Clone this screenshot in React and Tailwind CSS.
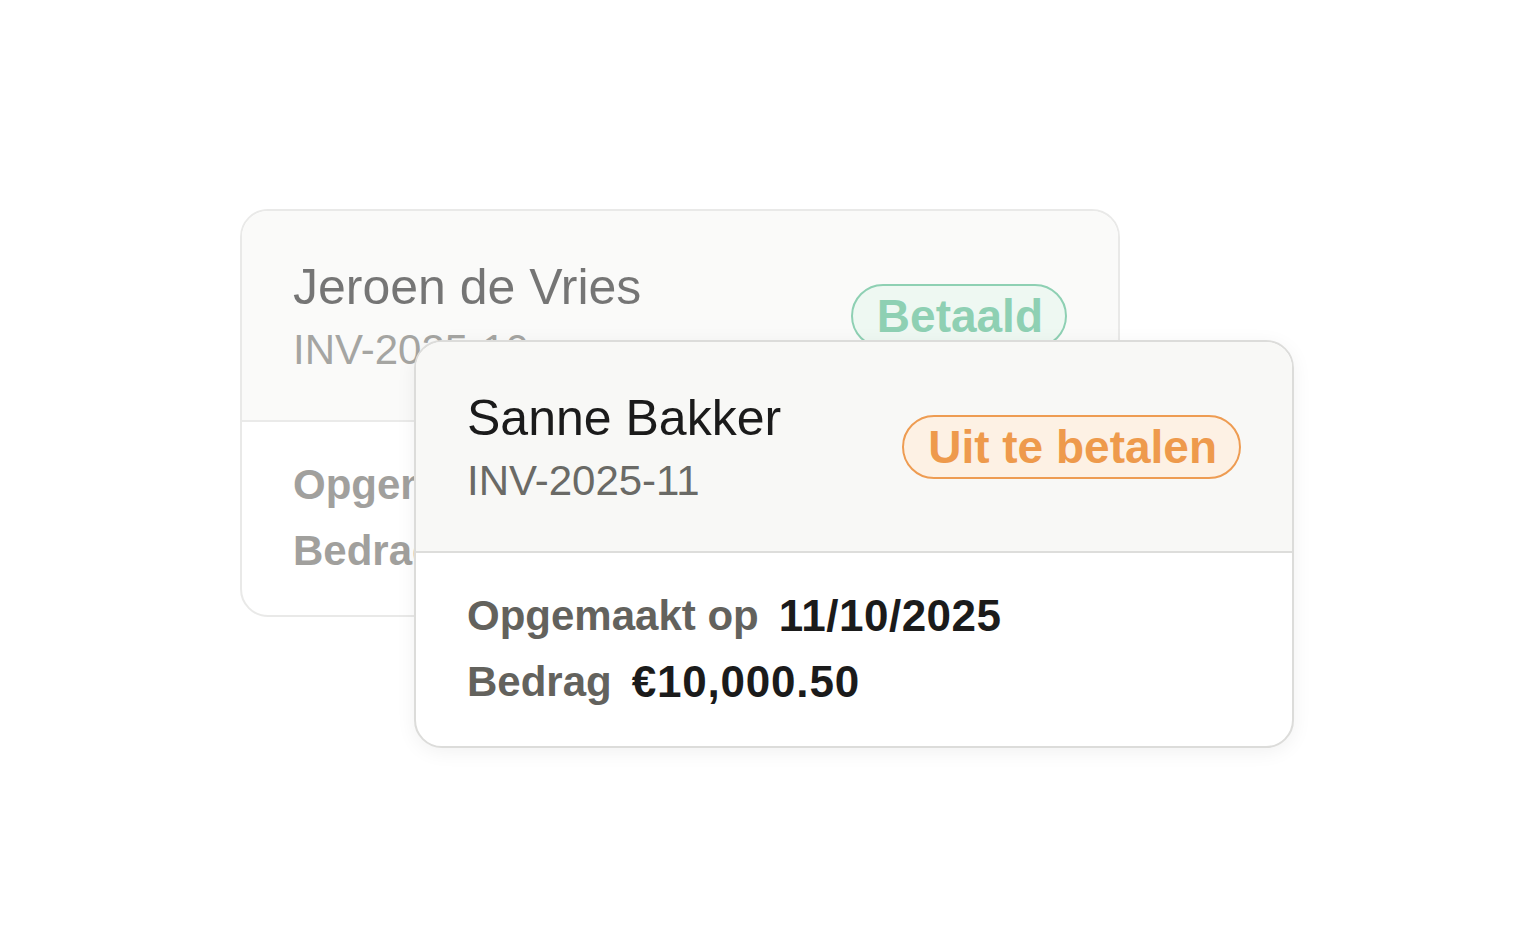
import React from "react";

const invoices = [
  {
    name: "Jeroen de Vries",
    number: "INV-2025-10",
    status: "Betaald",
    tone: "paid",
    created: "10/10/2025",
    amount: "€8,250.00",
  },
  {
    name: "Sanne Bakker",
    number: "INV-2025-11",
    status: "Uit te betalen",
    tone: "open",
    created: "11/10/2025",
    amount: "€10,000.50",
  },
];

const badgeTones = {
  paid: "bg-[#e3f5eb] border-[#44b182] text-[#44b182]",
  open: "bg-[#fdf1e4] border-[#ee9c52] text-[#ee9a4c]",
};

const InvoiceCard = ({ invoice, className = "" }) => (
  <div
    className={`w-[880px] h-[408px] flex flex-col rounded-[28px] border-2 border-[#dcdcda] bg-white overflow-hidden ${className}`}
  >
    <div className="h-[211px] shrink-0 flex items-center justify-between pl-[51px] pr-[51px] bg-[#f8f8f6] border-b-2 border-[#dddddb]">
      <div className="flex flex-col gap-[8px] pt-[1px]">
        <div className="text-[50px] leading-[60px] text-[#1b1b1b]">
          {invoice.name}
        </div>
        <div className="text-[42px] leading-[50px] text-[#6a6a66]">
          {invoice.number}
        </div>
      </div>
      <div
        className={`h-[64px] flex items-center pl-[24px] pr-[22px] rounded-full border-2 text-[46px] font-bold leading-none ${badgeTones[invoice.tone]}`}
      >
        {invoice.status}
      </div>
    </div>
    <div className="flex-1 flex flex-col justify-center gap-[14px] pl-[51px] pb-[2px]">
      <div className="flex items-center gap-[20px] leading-[52px] font-bold">
        <span className="text-[42px] text-[#63625d]">Opgemaakt op</span>
        <span className="text-[44px] tracking-[0.5px] text-[#1b1b1b]">
          {invoice.created}
        </span>
      </div>
      <div className="flex items-center gap-[20px] leading-[52px] font-bold">
        <span className="text-[42px] text-[#63625d]">Bedrag</span>
        <span className="text-[44px] tracking-[0.8px] text-[#1b1b1b]">
          {invoice.amount}
        </span>
      </div>
    </div>
  </div>
);

export default function App() {
  return (
    <div
      className="w-full h-[928px] bg-white flex justify-start pl-[240px] pt-[209px] overflow-hidden"
      style={{ fontFamily: '"Liberation Sans", Arial, sans-serif' }}
    >
      <div className="grid">
        <InvoiceCard
          invoice={invoices[0]}
          className="col-start-1 row-start-1 opacity-60"
        />
        <InvoiceCard
          invoice={invoices[1]}
          className="relative col-start-1 row-start-1 ml-[174px] mt-[131px] shadow-[0_4px_20px_rgba(0,0,0,0.06)]"
        />
      </div>
    </div>
  );
}
